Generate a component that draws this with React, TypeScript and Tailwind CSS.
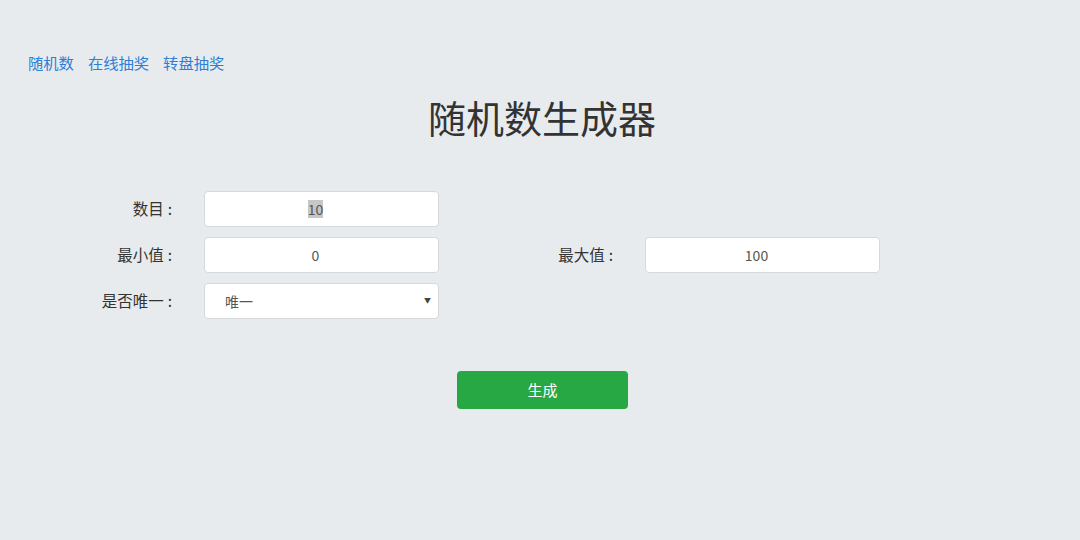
import React from 'react';

const font = { fontFamily: '"Noto Sans CJK SC", "Noto Sans", sans-serif' };

const Field: React.FC<{ label: string; children: React.ReactNode }> = ({ label, children }) => (
  <div className="flex items-center">
    <div className="w-[204px] pr-[32px] text-right text-[15.5px] text-[#333]">
      {label}
      <span className="ml-[4px]">:</span>
    </div>
    {children}
  </div>
);

const Box: React.FC<{ children: React.ReactNode; className?: string }> = ({ children, className }) => (
  <div
    className={
      'flex h-[36px] w-[235px] items-center rounded-[4px] border border-[#d6d9dc] bg-white text-[14px] text-[#555] ' +
      (className ?? '')
    }
  >
    {children}
  </div>
);

export default function App() {
  return (
    <div className="min-h-[540px] w-full bg-[#e8ebee]" style={font}>
      {/* Nav */}
      <nav className="flex gap-[14px] pl-[28px] pt-[52px] text-[15.3px] leading-[21px] text-[#2b7fd6]">
        <a href="#">随机数</a>
        <a href="#">在线抽奖</a>
        <a href="#">转盘抽奖</a>
      </nav>

      <h1 className="mt-[20px] pl-[4px] text-center text-[38px] leading-[48px] text-[#333]">随机数生成器</h1>

      {/* Form */}
      <div className="mt-[50px] flex flex-col gap-[10px]">
        <div className="flex">
          <Field label="数目">
            <Box className="justify-center pr-[12px]">
              <span className="bg-[#c6c6c6] leading-[18px]">10</span>
            </Box>
          </Field>
        </div>
        <div className="flex gap-[2px]">
          <Field label="最小值">
            <Box className="justify-center pr-[12px]">0</Box>
          </Field>
          <Field label="最大值">
            <Box className="justify-center pr-[12px]">100</Box>
          </Field>
        </div>
        <div className="flex">
          <Field label="是否唯一">
            <Box className="relative justify-start pl-[20px]">
              <span>唯一</span>
              <span className="absolute right-[7px] top-[10px] text-[7px] leading-[12px] text-[#444]">▼</span>
            </Box>
          </Field>
        </div>
      </div>

      <div className="mt-[52px] flex justify-center pl-[5px]">
        <button className="h-[38px] w-[171px] rounded-[4px] bg-[#28a745] text-[15px] text-white">生成</button>
      </div>
    </div>
  );
}
